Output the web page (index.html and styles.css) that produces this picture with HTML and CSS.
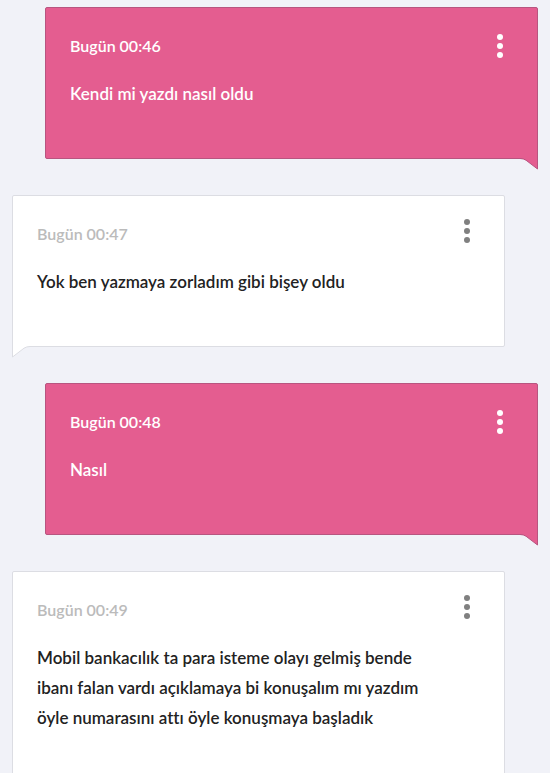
FILE: index.html
```html
<!DOCTYPE html>
<html lang="tr">
<head>
<meta charset="utf-8">
<meta name="viewport" content="width=device-width, initial-scale=1">
<title>Mesajlar</title>
<link rel="stylesheet" href="styles.css">
</head>
<body>
<main class="chat">
  <article class="bubble sent">
    <header class="bubble-head">
      <time class="time">Bugün 00:46</time>
      <button class="menu" type="button" aria-label="Mesaj seçenekleri"><svg class="dots" viewBox="0 0 6 24" aria-hidden="true"><circle cx="3" cy="3" r="3"/><circle cx="3" cy="12" r="3"/><circle cx="3" cy="21" r="3"/></svg></button>
    </header>
    <p class="text">Kendi mi yazdı nasıl oldu</p>
    <svg class="tail" viewBox="0 0 18 12" aria-hidden="true"><path class="tail-fill" d="M0 0H17.5V11L6 2.2Q3.5 .5 0 .5Z"/><path class="tail-line" d="M0 .5Q3.5 .5 6 2.2L17.5 11V0"/></svg>
  </article>

  <article class="bubble received">
    <header class="bubble-head">
      <time class="time">Bugün 00:47</time>
      <button class="menu" type="button" aria-label="Mesaj seçenekleri"><svg class="dots" viewBox="0 0 6 24" aria-hidden="true"><circle cx="3" cy="3" r="3"/><circle cx="3" cy="12" r="3"/><circle cx="3" cy="21" r="3"/></svg></button>
    </header>
    <p class="text">Yok ben yazmaya zorladım gibi bişey oldu</p>
    <svg class="tail" viewBox="0 0 18 12" aria-hidden="true"><path class="tail-fill" d="M18 0H.5V11L12 2.2Q14.5 .5 18 .5Z"/><path class="tail-line" d="M18 .5Q14.5 .5 12 2.2L.5 11V0"/></svg>
  </article>

  <article class="bubble sent">
    <header class="bubble-head">
      <time class="time">Bugün 00:48</time>
      <button class="menu" type="button" aria-label="Mesaj seçenekleri"><svg class="dots" viewBox="0 0 6 24" aria-hidden="true"><circle cx="3" cy="3" r="3"/><circle cx="3" cy="12" r="3"/><circle cx="3" cy="21" r="3"/></svg></button>
    </header>
    <p class="text">Nasıl</p>
    <svg class="tail" viewBox="0 0 18 12" aria-hidden="true"><path class="tail-fill" d="M0 0H17.5V11L6 2.2Q3.5 .5 0 .5Z"/><path class="tail-line" d="M0 .5Q3.5 .5 6 2.2L17.5 11V0"/></svg>
  </article>

  <article class="bubble received">
    <header class="bubble-head">
      <time class="time">Bugün 00:49</time>
      <button class="menu" type="button" aria-label="Mesaj seçenekleri"><svg class="dots" viewBox="0 0 6 24" aria-hidden="true"><circle cx="3" cy="3" r="3"/><circle cx="3" cy="12" r="3"/><circle cx="3" cy="21" r="3"/></svg></button>
    </header>
    <p class="text">Mobil bankacılık ta para isteme olayı gelmiş bende ibanı falan vardı açıklamaya bi konuşalım mı yazdım öyle numarasını attı öyle konuşmaya başladık</p>
    <svg class="tail" viewBox="0 0 18 12" aria-hidden="true"><path class="tail-fill" d="M18 0H.5V11L12 2.2Q14.5 .5 18 .5Z"/><path class="tail-line" d="M18 .5Q14.5 .5 12 2.2L.5 11V0"/></svg>
  </article>
</main>
</body>
</html>
```
FILE: styles.css
```css
* {
  box-sizing: border-box;
}

body {
  margin: 0;
  background: #f1f2f8;
  font-family: Lato, "Open Sans", sans-serif;
  font-size: 17px;
  font-weight: 600;
  font-variant-ligatures: none;
  line-height: 30px;
}

.chat {
  display: flex;
  flex-direction: column;
  gap: 36px;
  height: 100vh;
  padding: 7px 12px 24px;
  overflow-y: auto;
  scrollbar-width: none;
}

.bubble {
  --fill: #fff;
  --line: #dcdde3;
  position: relative;
  flex: none;
  width: calc(100% - 33px);
  padding: 23px 24px 49px;
  background: var(--fill);
  border: 1px solid var(--line);
  border-radius: 2px;
}

.sent {
  --fill: #e45d90;
  --line: #b85580;
  align-self: flex-end;
  border-bottom-right-radius: 0;
  color: #fff;
}

.received {
  border-bottom-left-radius: 0;
  color: #222;
}

.bubble-head {
  display: flex;
  justify-content: space-between;
  align-items: center;
  margin-bottom: 18px;
}

.time {
  font-size: 16px;
}

.received .time {
  color: #bbb;
}

.menu {
  display: flex;
  justify-content: center;
  align-items: center;
  width: 26px;
  height: 30px;
  padding: 0;
  border: 0;
  background: none;
  color: inherit;
}

.received .menu {
  align-items: flex-start;
  color: #808080;
}

.dots {
  width: 6px;
  height: 24px;
  fill: currentColor;
}

.text {
  margin: 0;
  padding-right: 40px;
}

.tail {
  position: absolute;
  top: 100%;
  width: 18px;
  height: 12px;
}

.sent .tail {
  right: -1px;
}

.received .tail {
  left: -1px;
}

.tail-fill {
  fill: var(--fill);
}

.tail-line {
  fill: none;
  stroke: var(--line);
}
```
